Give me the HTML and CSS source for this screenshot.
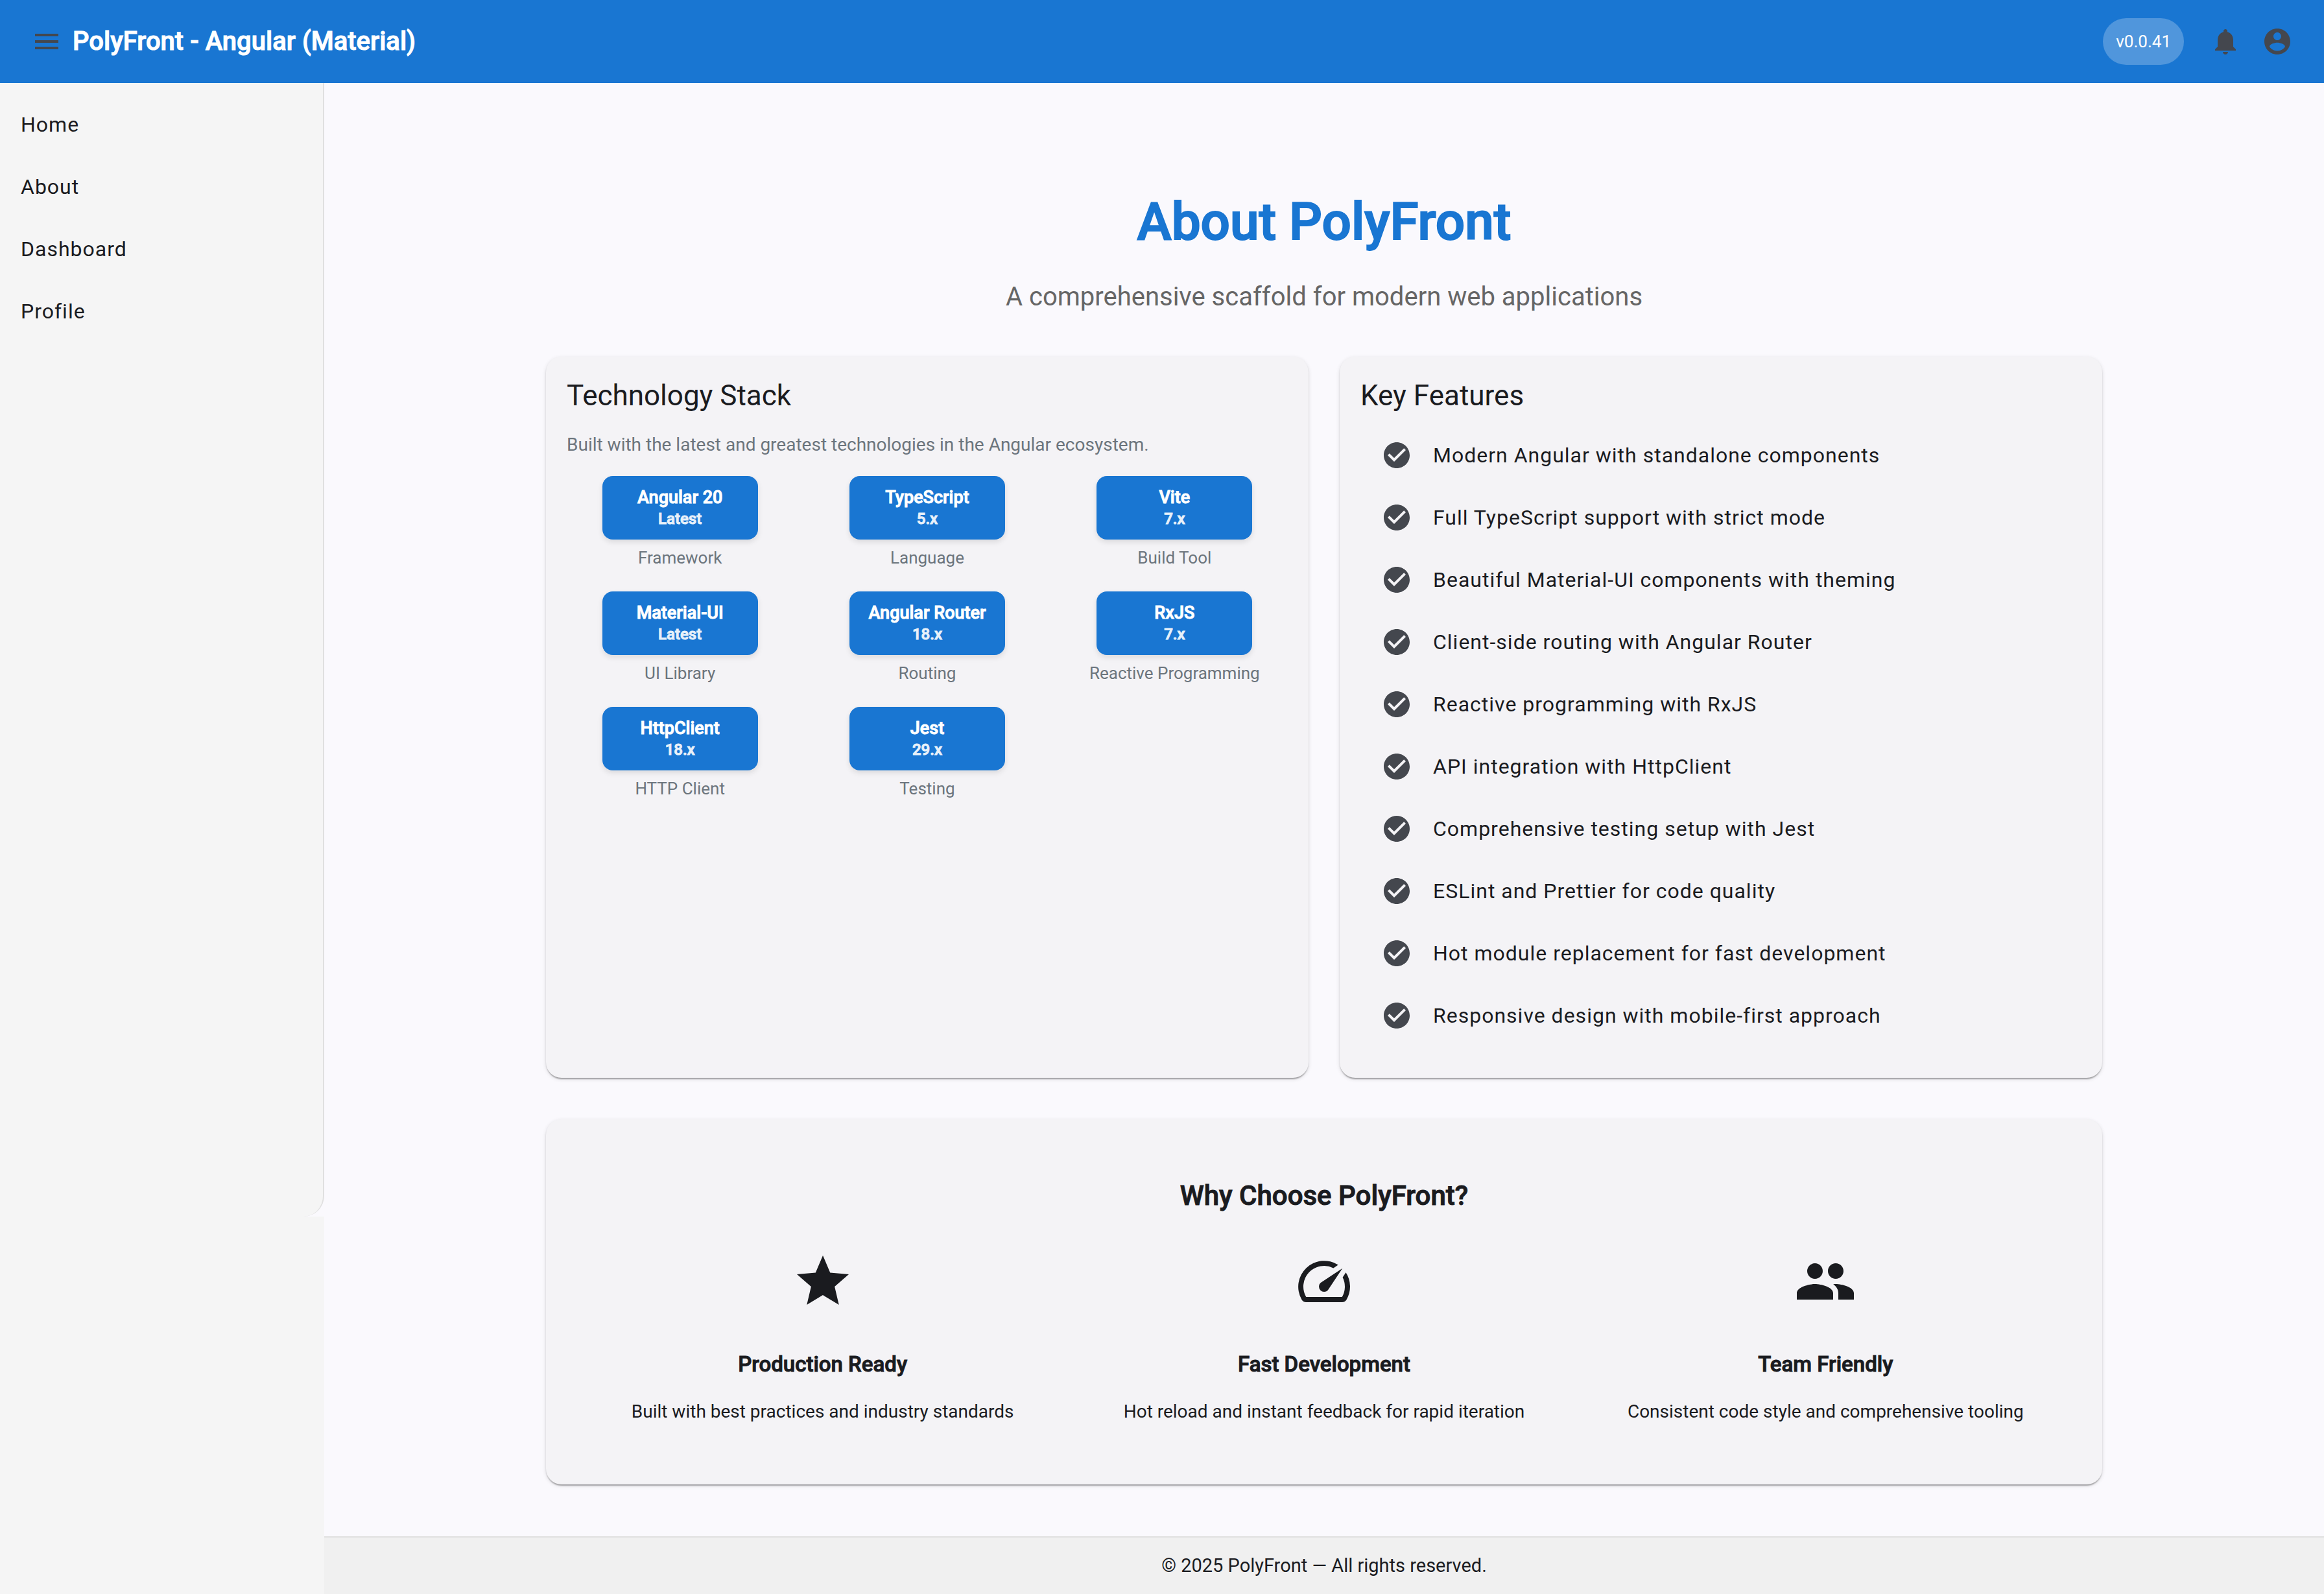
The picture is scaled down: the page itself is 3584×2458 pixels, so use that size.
FILE: index.html
```html
<!DOCTYPE html>
<html lang="en">
<head>
<meta charset="utf-8">
<title>PolyFront - Angular (Material)</title>
<link rel="stylesheet" href="styles.css">
</head>
<body>
<svg class="sprite" aria-hidden="true">
  <symbol id="check" viewBox="0 0 24 24"><path d="M12 2C6.48 2 2 6.48 2 12s4.48 10 10 10 10-4.48 10-10S17.52 2 12 2zm-2 15l-5-5 1.41-1.41L10 14.17l7.59-7.59L19 8l-9 9z"/></symbol>
</svg>
<header class="toolbar">
  <button class="icon-button" type="button" aria-label="Toggle menu"><svg class="icon" viewBox="0 0 24 24"><path d="M3 18h18v-2H3v2zm0-5h18v-2H3v2zm0-7v2h18V6H3z"/></svg></button>
  <h1 class="toolbar-title">PolyFront - Angular (Material)</h1>
  <span class="version">v0.0.41</span>
  <button class="icon-button" type="button" aria-label="Notifications"><svg class="icon" viewBox="0 0 24 24"><path d="M12 22c1.1 0 2-.9 2-2h-4c0 1.1.89 2 2 2zm6-6v-5c0-3.07-1.64-5.64-4.5-6.32V4c0-.83-.67-1.5-1.500-1.500s-1.500.67-1.500 1.500v.68C7.630 5.360 6 7.920 6 11v5l-2 2v1h16v-1l-2-2z"/></svg></button>
  <button class="icon-button" type="button" aria-label="Account"><svg class="icon" viewBox="0 0 24 24"><path d="M12 2C6.48 2 2 6.48 2 12s4.48 10 10 10 10-4.48 10-10S17.520 2 12 2zm0 3c1.660 0 3 1.340 3 3s-1.340 3-3 3-3-1.340-3-3 1.340-3 3-3zm0 14.200c-2.500 0-4.710-1.280-6-3.220.03-1.990 4-3.080 6-3.080 1.990 0 5.970 1.090 6 3.080-1.290 1.940-3.500 3.220-6 3.220z"/></svg></button>
</header>
<div class="shell">
  <aside class="sidebar">
    <div class="drawer-back">
      <nav class="drawer">
        <a href="#home">Home</a>
        <a href="#about">About</a>
        <a href="#dashboard">Dashboard</a>
        <a href="#profile">Profile</a>
      </nav>
    </div>
  </aside>
  <div class="content">
    <main class="page">
      <div class="hero">
        <h1 class="hero-title">About PolyFront</h1>
        <p class="hero-subtitle">A comprehensive scaffold for modern web applications</p>
      </div>
      <div class="cards">
        <section class="card">
          <h2 class="card-title">Technology Stack</h2>
          <p class="card-intro">Built with the latest and greatest technologies in the Angular ecosystem.</p>
          <div class="tech-grid">
            <div class="tech"><div class="badge"><span>Angular 20</span><small>Latest</small></div><p>Framework</p></div>
            <div class="tech"><div class="badge"><span>TypeScript</span><small>5.x</small></div><p>Language</p></div>
            <div class="tech"><div class="badge"><span>Vite</span><small>7.x</small></div><p>Build Tool</p></div>
            <div class="tech"><div class="badge"><span>Material-UI</span><small>Latest</small></div><p>UI Library</p></div>
            <div class="tech"><div class="badge"><span>Angular Router</span><small>18.x</small></div><p>Routing</p></div>
            <div class="tech"><div class="badge"><span>RxJS</span><small>7.x</small></div><p>Reactive Programming</p></div>
            <div class="tech"><div class="badge"><span>HttpClient</span><small>18.x</small></div><p>HTTP Client</p></div>
            <div class="tech"><div class="badge"><span>Jest</span><small>29.x</small></div><p>Testing</p></div>
          </div>
        </section>
        <section class="card">
          <h2 class="card-title">Key Features</h2>
          <ul class="features">
            <li><svg class="icon"><use href="#check"/></svg>Modern Angular with standalone components</li>
            <li><svg class="icon"><use href="#check"/></svg>Full TypeScript support with strict mode</li>
            <li><svg class="icon"><use href="#check"/></svg>Beautiful Material-UI components with theming</li>
            <li><svg class="icon"><use href="#check"/></svg>Client-side routing with Angular Router</li>
            <li><svg class="icon"><use href="#check"/></svg>Reactive programming with RxJS</li>
            <li><svg class="icon"><use href="#check"/></svg>API integration with HttpClient</li>
            <li><svg class="icon"><use href="#check"/></svg>Comprehensive testing setup with Jest</li>
            <li><svg class="icon"><use href="#check"/></svg>ESLint and Prettier for code quality</li>
            <li><svg class="icon"><use href="#check"/></svg>Hot module replacement for fast development</li>
            <li><svg class="icon"><use href="#check"/></svg>Responsive design with mobile-first approach</li>
          </ul>
        </section>
      </div>
      <section class="card why">
        <h2 class="why-title">Why Choose PolyFront?</h2>
        <div class="reasons">
          <div class="reason">
            <svg class="reason-icon" viewBox="0 0 24 24"><path d="M12 17.270L18.180 21l-1.640-7.030L22 9.240l-7.190-.61L12 2 9.190 8.630 2 9.240l5.460 4.730L5.820 21z"/></svg>
            <h3>Production Ready</h3>
            <p>Built with best practices and industry standards</p>
          </div>
          <div class="reason">
            <svg class="reason-icon" viewBox="0 0 24 24"><path d="M20.380 8.570l-1.230 1.850a8 8 0 0 1-.22 7.580H5.070A8 8 0 0 1 15.580 6.850l1.850-1.230A10 10 0 0 0 3.350 19a2 2 0 0 0 1.720 1h13.850a2 2 0 0 0 1.740-1 10 10 0 0 0-.27-10.440zm-9.790 6.840a2 2 0 0 0 2.830 0l5.660-8.490-8.490 5.660a2 2 0 0 0 0 2.830z"/></svg>
            <h3>Fast Development</h3>
            <p>Hot reload and instant feedback for rapid iteration</p>
          </div>
          <div class="reason">
            <svg class="reason-icon" viewBox="0 0 24 24"><path d="M16 11c1.660 0 2.990-1.340 2.990-3S17.660 5 16 5s-3 1.340-3 3 1.340 3 3 3zm-8 0c1.660 0 2.990-1.340 2.990-3S9.660 5 8 5 5 6.340 5 8s1.340 3 3 3zm0 2c-2.330 0-7 1.170-7 3.500V19h14v-2.500c0-2.330-4.670-3.500-7-3.500zm8 0c-.29 0-.62.020-.97.050 1.160.84 1.970 1.970 1.970 3.450V19h6v-2.500c0-2.330-4.670-3.500-7-3.500z"/></svg>
            <h3>Team Friendly</h3>
            <p>Consistent code style and comprehensive tooling</p>
          </div>
        </div>
      </section>
    </main>
    <footer class="footer">© 2025 PolyFront — All rights reserved.</footer>
  </div>
</div>
</body>
</html>
```

FILE: styles.css
```css
* {
  box-sizing: border-box;
}

body {
  margin: 0;
  min-height: 100vh;
  display: flex;
  flex-direction: column;
  background: #faf9fd;
  color: #1a1b1f;
  font-family: Roboto, "Liberation Sans", sans-serif;
  font-size: 28px;
}

h1, h2, h3, p, ul {
  margin: 0;
  padding: 0;
}

/* Medium weight, thickened by a thin outline */
h1, h3, .why-title, .badge {
  font-weight: 500;
  -webkit-text-stroke: 1px currentColor;
}

.sprite {
  display: none;
}

.icon {
  display: block;
  flex: none;
  width: 48px;
  height: 48px;
  fill: #44474e;
}

/* Toolbar */
.toolbar {
  display: flex;
  align-items: center;
  height: 128px;
  padding: 0 32px;
  background: #1976d2;
  color: #fff;
}

.icon-button {
  display: grid;
  place-items: center;
  width: 80px;
  height: 80px;
  padding: 0;
  border: 0;
  background: none;
}

.toolbar-title {
  margin-right: auto;
  font-size: 40px;
  line-height: 48px;
}

.version {
  margin-right: 24px;
  padding: 0 20px;
  border-radius: 36px;
  background: rgba(255, 255, 255, 0.24);
  font-size: 26px;
  line-height: 72px;
}

/* Side navigation */
.shell {
  flex: 1;
  display: grid;
  grid-template-columns: 500px 1fr;
}

.sidebar {
  background: #f5f5f5;
}

.drawer-back {
  background: #faf9fd;
}

.drawer {
  display: flex;
  flex-direction: column;
  min-height: calc(100vh - 710px);
  padding: 16px 0;
  border-right: 2px solid #e0e0e0;
  border-radius: 0 0 32px 0;
  background: #f5f5f5;
}

.drawer a {
  padding: 0 32px;
  color: inherit;
  font-size: 32px;
  line-height: 96px;
  letter-spacing: 1px;
  text-decoration: none;
}

/* Page */
.content {
  display: flex;
  flex-direction: column;
}

.page {
  flex: 1;
  width: 100%;
  max-width: 2400px;
  margin: 0 auto;
  padding: 168px 0 80px;
}

.hero {
  padding-bottom: 68px;
  text-align: center;
}

.hero-title {
  color: #1976d2;
  font-size: 80px;
  line-height: 92px;
  -webkit-text-stroke-width: 2px;
}

.hero-subtitle {
  margin-top: 46px;
  color: #666;
  font-size: 40px;
  line-height: 48px;
}

.cards {
  display: grid;
  grid-template-columns: 1fr 1fr;
  gap: 48px;
  margin-bottom: 64px;
}

.card {
  padding: 32px;
  border-radius: 24px;
  background: #f4f3f6;
  box-shadow: 0 4px 2px -2px rgba(0, 0, 0, 0.2), 0 2px 2px rgba(0, 0, 0, 0.14), 0 2px 6px rgba(0, 0, 0, 0.12);
}

.card-title {
  font-size: 44px;
  line-height: 56px;
  font-weight: 400;
}

.card-intro {
  margin: 28px 0;
  color: #6c757d;
  line-height: 40px;
}

.tech-grid {
  display: grid;
  grid-template-columns: repeat(3, 1fr);
  gap: 36px 32px;
}

.tech {
  display: flex;
  flex-direction: column;
  align-items: center;
  gap: 12px;
  color: #6c757d;
  font-size: 26px;
  line-height: 32px;
}

.badge {
  display: flex;
  flex-direction: column;
  align-items: center;
  min-width: 240px;
  padding: 17px 16px 15px;
  border-radius: 16px;
  background: #1976d2;
  box-shadow: 0 4px 8px rgba(0, 0, 0, 0.1);
  color: #fff;
  font-size: 27px;
}

.badge small {
  font-size: 24px;
  line-height: 34px;
  opacity: 0.9;
}

.features {
  padding: 16px 0;
  list-style: none;
}

.features li {
  display: flex;
  align-items: center;
  gap: 32px;
  padding: 0 32px;
  font-size: 32px;
  line-height: 96px;
  letter-spacing: 1px;
}

/* Why choose */
.why {
  padding: 94px 64px 92px;
  text-align: center;
}

.why-title {
  margin-bottom: 60px;
  font-size: 42px;
  line-height: 48px;
}

.reasons {
  display: grid;
  grid-template-columns: repeat(3, 1fr);
  gap: 48px;
}

.reason-icon {
  display: block;
  width: 96px;
  height: 96px;
  margin: 0 auto 60px;
  fill: #1a1b1f;
}

.reason h3 {
  margin-bottom: 33px;
  font-size: 33px;
  line-height: 40px;
}

.reason p {
  line-height: 40px;
}

.footer {
  padding: 24px;
  border-top: 2px solid #e0e0e0;
  background: #f0f0f0;
  font-size: 29px;
  line-height: 39px;
  text-align: center;
}
```
